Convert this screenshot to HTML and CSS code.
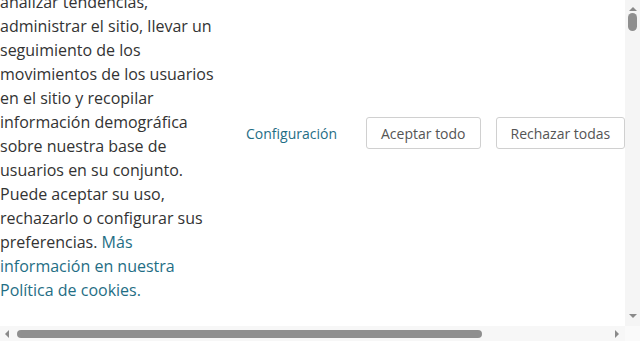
FILE: index.html
```html
<!DOCTYPE html>
<html lang="es">
<head>
	<meta charset="UTF-8" name="viewport" content="width=device-width" />
	<title>Cookies</title>
	<link rel="stylesheet" href="styles.css">
</head>
<body>
	<div class="window">
		<div class="viewport" id="viewport">
			<div class="page">
				<div class="cookie-banner">
					<p class="cookie-text">
						Utilizamos cookies para analizar tendencias, administrar el sitio, llevar un seguimiento de los movimientos de los usuarios en el sitio y recopilar información demográfica sobre nuestra base de usuarios en su conjunto. Puede aceptar su uso, rechazarlo o configurar sus preferencias. <a href="#">Más información en nuestra Política de cookies.</a>
					</p>
					<div class="cookie-actions">
						<a class="cookie-config" href="#">Configuración</a>
						<button class="cookie-btn">Aceptar todo</button>
						<button class="cookie-btn">Rechazar todas</button>
					</div>
				</div>
			</div>
		</div>
		<div class="vbar">
			<span class="arrow arrow-up"></span>
			<span class="vthumb"></span>
			<span class="arrow arrow-down"></span>
		</div>
		<div class="hbar">
			<span class="arrow arrow-left"></span>
			<span class="hthumb"></span>
			<span class="arrow arrow-right"></span>
		</div>
		<div class="corner"></div>
	</div>
	<script src="script.js"></script>
</body>
</html>
```

FILE: styles.css
```css
body {
	margin: 0;
	overflow: hidden;
	font-family: "Open Sans", "Liberation Sans", sans-serif;
	color: #333;
	background: #fff;
}
.window {
	display: grid;
	grid-template-columns: 625px 15px;
	grid-template-rows: 326px 15px;
	width: 640px;
	height: 341px;
}
.viewport {
	overflow: hidden;
}
.page {
	width: 796px;
	height: 5080px;
}
.cookie-banner {
	display: flex;
	align-items: center;
}
.cookie-text {
	width: 214px;
	margin: 0;
	font-size: 16px;
	line-height: 24px;
}
.cookie-text a {
	color: #1f6e85;
	text-decoration: none;
}
.cookie-actions {
	display: flex;
	align-items: center;
	gap: 15px;
	margin-left: 32px;
	margin-bottom: 2px;
}
.cookie-config {
	margin-right: 14px;
	font-size: 14px;
	color: #1f6e85;
	text-decoration: none;
}
.cookie-btn {
	height: 32px;
	padding: 0 14px;
	border: 1px solid #d0d0d0;
	border-radius: 3px;
	background: #fff;
	font-family: inherit;
	font-size: 14px;
	color: #555;
}

/* scrollbars */
.vbar {
	display: flex;
	flex-direction: column;
	align-items: center;
	background: #f5f5f5;
}
.hbar {
	display: flex;
	align-items: center;
	background: #f7f7f7;
}
.corner {
	background: #fafafa;
}
.arrow {
	width: 0;
	height: 0;
	border: 4px solid transparent;
}
.arrow-up {
	margin-top: 3px;
	border-bottom-color: #8a8a8a;
}
.arrow-down {
	margin-top: auto;
	margin-bottom: 4px;
	border-top-color: #8a8a8a;
}
.arrow-left {
	margin-left: 1px;
	border-right-color: #8a8a8a;
}
.arrow-right {
	margin-left: auto;
	margin-right: 2px;
	border-left-color: #8a8a8a;
}
.vthumb {
	width: 9px;
	height: 18px;
	margin-top: 2px;
	border-radius: 5px;
	background: #8f8f8f;
}
.hthumb {
	width: 465px;
	height: 8px;
	margin-left: 8px;
	border-radius: 4px;
	background: #8f8f8f;
}
```

FILE: script.js
```js
document.getElementById("viewport").scrollTop = 34;
```
